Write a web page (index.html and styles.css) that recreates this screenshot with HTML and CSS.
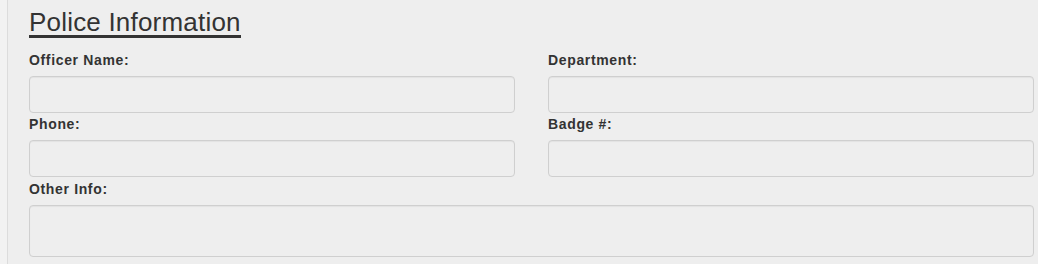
FILE: index.html
```html
<!DOCTYPE html>
<html lang="en">
<head>
  <meta charset="UTF-8">
  <title>Police Information</title>
  <link rel="stylesheet" href="styles.css">
</head>
<body>
  <div class="panel">
    <h2 class="section-title">Police Information</h2>
    <div class="fields">
      <div class="field">
        <label for="officer-name">Officer Name:</label>
        <input type="text" id="officer-name" />
      </div>
      <div class="field">
        <label for="department">Department:</label>
        <input type="text" id="department" />
      </div>
      <div class="field">
        <label for="phone">Phone:</label>
        <input type="text" id="phone" />
      </div>
      <div class="field">
        <label for="badge">Badge #:</label>
        <input type="text" id="badge" />
      </div>
      <div class="field wide">
        <label for="other-info">Other Info:</label>
        <textarea id="other-info"></textarea>
      </div>
    </div>
  </div>
</body>
</html>
```

FILE: styles.css
```css
body {
  margin: 0;
  padding: 0;
  background: #f2f2f2;
  font-family: "Liberation Sans", Arial, sans-serif;
  color: #333;
}
.panel {
  margin-left: 7px;
  border-left: 1px solid #dcdcdc;
  background: #eeeeee;
  padding: 9px 4px 8px 21px;
  min-height: 247px;
}
.section-title {
  display: inline-block;
  margin: 0 0 14px 0;
  font-size: 26px;
  line-height: 26px;
  font-weight: normal;
  letter-spacing: 0.2px;
  color: #333;
  border-bottom: 3px solid #333;
}
.fields {
  display: grid;
  grid-template-columns: 1fr 1fr;
  column-gap: 33px;
}
.field {
  display: flex;
  flex-direction: column;
  margin-bottom: 3px;
}
.field.wide {
  grid-column: 1 / 3;
  margin-top: 1px;
}
.field label {
  font-size: 14px;
  line-height: 16px;
  font-weight: bold;
  letter-spacing: 0.65px;
  color: #333;
  margin-bottom: 8px;
}
.field input[type="text"],
.field textarea {
  box-sizing: border-box;
  height: 37px;
  margin: 0;
  padding: 6px 10px;
  border: 1px solid #cfcfcf;
  border-radius: 4px;
  background: #eeeeee;
  box-shadow: inset 0 1px 1px rgba(0, 0, 0, 0.05);
  font-family: inherit;
  font-size: 14px;
  color: #333;
}
.field textarea {
  height: 52px;
  resize: none;
}
```
